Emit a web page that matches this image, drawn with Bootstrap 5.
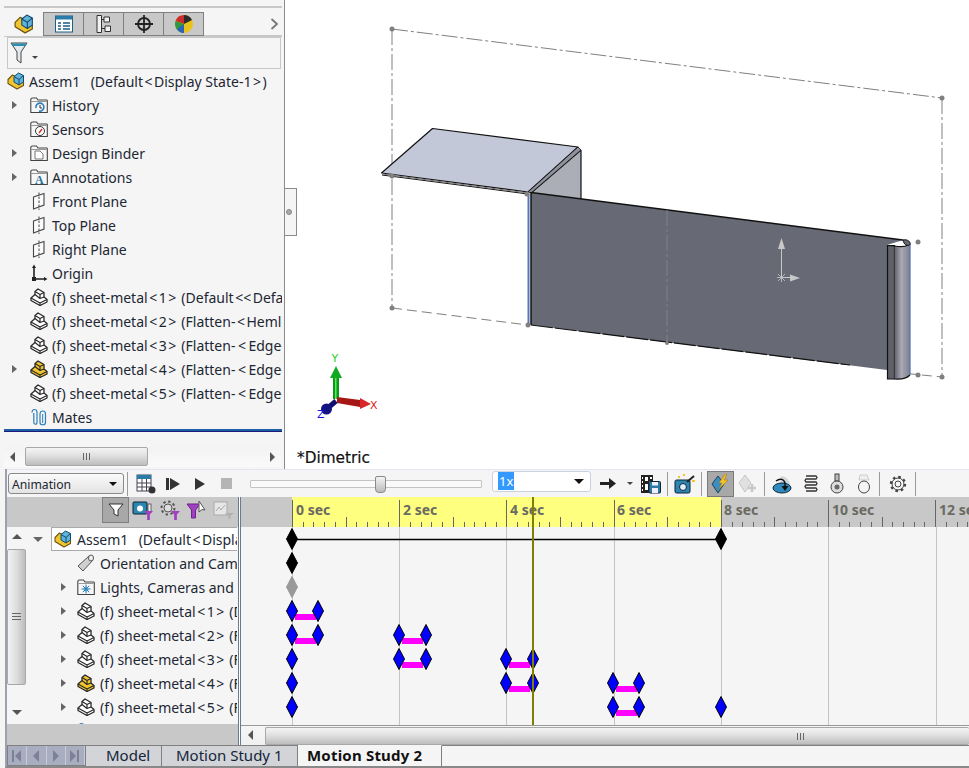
<!DOCTYPE html>
<html lang="en">
<head>
<meta charset="utf-8">
<title>Assem1 - Motion Study</title>
<link href="https://cdn.jsdelivr.net/npm/bootstrap@5.3.0/dist/css/bootstrap.min.css" rel="stylesheet">
<style>
html,body{height:100%;margin:0}
body{width:969px;height:768px;background:#f5f5f5;font-family:"Noto Sans",sans-serif;font-size:14px;color:#1c2733;overflow:hidden}
svg{display:block;flex:none}
.ab{margin:0 1.5px}
.ab2{margin:0 2.5px}
.top-pane{height:469px}
.tree-pane{width:285px;flex:none;border-right:1px solid #8c8c8c;padding:6px 2px 0 4px;background:#f5f5f5}
.rule{border-top:2px solid #c8c8c8;height:6px}
.pm-tabs{height:25px;border-bottom:2px solid #c8c8c8;flex-wrap:nowrap}
.pm-tabs .nav-link{width:40px;height:24px;padding:0;margin-right:0;background:#c8c8c8;border:1px solid #808080;border-left:0;border-radius:0;display:flex;align-items:center;justify-content:center}
.pm-tabs .nav-link.active{background:#f5f5f5;border:0;border-right:1px solid #808080}
.chev{margin-left:auto;margin-right:3px;align-self:center}
.filter-box{margin:0 1px 0 3px;height:32px;border:1px solid #c8c8c8;padding:3px 0 0 2px}
.tree{margin:0;padding:0;list-style:none;overflow:hidden;border-bottom:2px solid #1f5fa8;box-shadow:0 1px 0 #1a1a7a}
.tree li{height:24px;display:flex;align-items:center;white-space:nowrap;overflow:hidden}
.tw{width:26px;flex:none;display:flex;justify-content:center;padding-right:6px}
.tree .ic{margin-right:4px}
.tree .root-row .ic{margin-left:3px;margin-right:4px}
.nb{margin-right:3px}
.exp{display:inline-block;width:0;height:0;border-left:5px solid #666;border-top:4px solid transparent;border-bottom:4px solid transparent}
.exp-down{display:inline-block;width:0;height:0;border-top:5px solid #666;border-left:5px solid transparent;border-right:5px solid transparent}
.hscroll{height:20px;background:linear-gradient(#f3f3f3,#fafafa);position:relative}
.left-hs{margin-top:16px;margin-right:1px}
.thumb-h{background:linear-gradient(#f4f4f4,#e0e0e0 45%,#bdbdbd);border:1px solid #a8a8a8;border-radius:2px;display:flex;align-items:center;justify-content:center}
.left-hs .thumb-h{margin-left:21px;width:123px;height:19px}
.arr-l,.arr-r{width:0;height:0;border-top:5px solid transparent;border-bottom:5px solid transparent}
.arr-l{border-right:5px solid #555}
.arr-r{border-left:5px solid #555}
.left-hs .arr-l{position:absolute;left:6px;top:5px}
.left-hs .arr-r{position:absolute;right:6px;top:5px}
.viewport{background:#fff;position:relative}
.viewport>svg{width:684px;height:469px}
.sash{position:absolute;left:0;top:188px;width:12px;height:48px;background:#f5f5f5;border:1px solid #8c8c8c;border-left:0;display:flex;align-items:center;justify-content:center}
.sash i{width:6px;height:6px;border-radius:50%;background:#aaa;border:1px solid #888;margin-right:3px}
.motion{margin-left:5px;border-left:2px solid #9aa3ad;height:276px;background:#f5f5f5}
.mtb{height:28px;padding-left:1px;border-top:1px solid #e3e6f0;align-items:center}
.drop{height:21px;display:flex;align-items:center;justify-content:space-between;border-radius:3px;font-size:12.200px;color:#1c2733;padding:3px 6px 0 3px}
.drop::after{border-top-width:.4em;border-right-width:.4em;border-left-width:.4em;color:#111;margin:0 0 3px}
.anim{width:116px;background:linear-gradient(#fafafa,#e4e4e4);border:1px solid #8a8a8a}
.rate{width:99px;margin:0 0 5px 10px;background:#fff;border:1px solid #c9d3e0;padding:0 6px 0 5px;font-size:13px}
.rate::after{margin:0}
.rate span{background:#3399ff;color:#fff;padding:0 1px;line-height:18px}
.sep{width:1px;height:24px;background:#9a9a9a;flex:none}
.tb{display:flex;align-items:center;justify-content:center;flex:none;height:26px}
.w27{width:27px}.w33{width:33px}.w12{width:12px}.w29{width:29px}.w26{width:26px}.w35{width:35px}
.m3{margin-left:3px}.m2{margin-left:2px}.m4{margin-left:4px}.m5{margin-left:5px}
.on{background:#a8a8a8;border:1px solid #7a7a7a}
.slider{width:232px;margin-left:10px;position:relative;height:8px;background:#fafafa;border:1px solid #c4c4c4;border-radius:1px}
.slider i{position:absolute;left:124px;top:-5px;width:11px;height:17px;background:linear-gradient(#f4f4f4,#bbb);border:1px solid #8a8a8a;border-radius:2px 2px 4px 4px}
.m-body{height:248px}
.m-left{width:231px;flex:none}
.m-head{height:30px;background:#c8c8c8;padding-left:95px}
.fbtn{width:27px;background:#a8a8a8;border:1px solid #7f7f7f}
.ico{width:27px}
.m-rows{height:197px}
.vscroll{width:20px;flex:none;background:#f5f5f5;position:relative;padding-top:22px}
.thumb-v{width:19px;height:136px;background:linear-gradient(90deg,#f2f2f2,#dedede 50%,#bdbdbd);border:1px solid #a8a8a8;border-radius:2px;display:flex;align-items:center;justify-content:center}
.arr-u,.arr-d{position:absolute;left:5px;width:0;height:0;border-left:5px solid transparent;border-right:5px solid transparent}
.arr-u{top:7px;border-bottom:5px solid #555}
.arr-d{bottom:9px;border-top:5px solid #555}
.mtree{margin:0 1px 0 0;padding:0;list-style:none;flex:1;overflow:hidden;min-width:0}
.mtree li{height:24px;display:flex;align-items:center;white-space:nowrap;overflow:hidden}
.mtree .mroot{margin-left:24px;background:#fff;border:1px solid #aaa;border-right:0;padding-left:2px}
.mtw{width:50px;flex:none;display:flex;justify-content:flex-end;padding-right:11px}
.mtree .ic{margin-right:5px}
.mroot-x{position:relative}
.x-down{position:absolute;left:6px;top:10px}
.m-foot{height:21px;background:#c8c8c8}
.split{width:3px;flex:none;border-left:1px solid #6c7a8c;border-right:1px solid #6c7a8c;background:#fff}
.m-right{width:728px;flex:none}
.m-right .hscroll{border-top:1px solid #999;background:linear-gradient(#f6f6f6,#f0f0f0)}
.m-right .thumb-h{position:absolute;left:24px;right:0;top:1px;height:18px;border-right:0;justify-content:flex-start}
.m-right .thumb-h svg{margin-left:530px}
.m-right .arr-l{position:absolute;left:7px;top:4px}
.sheet-tabs{height:21px;flex-wrap:nowrap;background:#f5f5f5;border-bottom:2px solid #888;margin-left:5px;border-left:2px solid #9aa3ad;box-sizing:content-box}
.sheet-nav{width:79px;background:#a9adc0;display:flex;border:1px solid #808080;flex:none}
.sheet-nav span{flex:1;border-right:1px solid #c9ccd8;display:flex;align-items:center;justify-content:center}
.sheet-tabs .nav-link{height:21px;border:0;border-top:1px solid #808080;border-right:1px solid #808080;border-radius:0;background:#d2d4d8;color:#14253a;font-size:15px;line-height:19px;text-align:left}
.sheet-tabs .t1{width:76px;padding:0 0 0 20px}
.sheet-tabs .t2{width:136px;padding:0 0 0 14px}
.sheet-tabs .nav-link.active{width:144px;padding:0 0 0 9px;background:#f5f5f5;color:#111;font-weight:700;letter-spacing:.2px;border-top:1px solid #f5f5f5}
.sheet-fill{flex:1;border-top:1px solid #808080}
.tl-text{font-family:"Noto Sans",sans-serif;font-weight:700;font-size:14px;fill:#6a6a62}
.dim-text{font-family:"DejaVu Sans",sans-serif;font-size:15.300px;fill:#111;stroke:#111;stroke-width:.2px}
.axis-text{font-family:"DejaVu Sans",sans-serif;font-size:11px}
.yl{--f:#f2c52e}
</style>
</head>
<body>
<svg width="0" height="0" class="position-absolute">
<defs>
<symbol id="part" viewBox="0 0 18 18"><path fill="var(--f,#fff)" stroke="#2a2a2a" stroke-width="1.300" stroke-linejoin="round" d="M1 10 5 6.500V3.500L8 1l6 3.500V9l3 2.500V14l-7 3.500-9-5z"/><path fill="none" stroke="#2a2a2a" stroke-width="1.200" stroke-linejoin="round" d="M5 3.500l5 3 4-2M10 6.500v4L5 6.500M1 10l9 5v2.500M10 15l7-3.500M10 10.500 14 9"/></symbol>
<symbol id="asm" viewBox="0 0 18 18"><path fill="#f2c52e" stroke="#6b5310" stroke-width="1.100" stroke-linejoin="round" d="M1 7.500 5.500 3l3 1.500v5l8 .5v3.500L10 17 1 11.500z"/><path fill="#5fb3dc" stroke="#134a6a" stroke-width="1" stroke-linejoin="round" d="M7 4.500 11.500 1l5 2.500V10L12 13 7 10z"/><path fill="none" stroke="#134a6a" d="M7 4.500 12 7.500l4.500-4M12 7.500V13"/></symbol>
<symbol id="folder" viewBox="0 0 18 18"><path fill="#f7f7f7" stroke="#444" stroke-width="1.100" d="M.8 3.500C.8 2.500 1.500 2 2.500 2h4l1.500 2h8.500c.5 0 .8.300.8.800V16.500H.8z"/><path fill="none" stroke="#999" d="M1.500 5.500h15"/></symbol>
<symbol id="plane" viewBox="0 0 18 18"><path fill="#fbfbfb" stroke="#444" stroke-width="1.100" d="M3.500 5 14 1.500V13L3.500 17z"/><path fill="none" stroke="#444" stroke-dasharray="2.500 1.500" d="M9 .5V18"/></symbol>
<symbol id="origin" viewBox="0 0 18 18"><path fill="none" stroke="#222" stroke-width="1.600" d="M4 3v12h12"/><path fill="#222" d="M4 .5 6 4H2zM17.500 15 14 17v-4zM2 13h4v4H2z"/></symbol>
<symbol id="mates" viewBox="0 0 18 18"><path fill="none" stroke="#2c7fb8" stroke-width="1.200" d="M2 4.500C2 .5 7 .5 7 4.500V14C7 17 3.800 17 3.800 14V5"/><path fill="none" stroke="#2c7fb8" stroke-width="1.200" d="M10 6c0-4 5.500-4 5.500 0v8.500c0 3-5.500 3-5.500 0V6"/><path fill="none" stroke="#2c7fb8" d="M12.700 6v9"/></symbol>
<symbol id="purple" viewBox="0 0 10 10"><path fill="#a03fc0" d="M0 0h10L6.500 4v6h-3V4z"/></symbol>
</defs>
</svg>

<div class="top-pane d-flex">
  <aside class="tree-pane">
    <div class="rule"></div>
    <nav class="nav pm-tabs">
      <a class="nav-link active"><svg width="20" height="20"><use href="#asm"/></svg></a>
      <a class="nav-link"><svg width="20" height="18" viewBox="0 0 20 18"><rect x="1.500" y="1" width="17" height="16" fill="#fff" stroke="#1d5f85"/><rect x="1.500" y="1" width="17" height="3.500" fill="#2b7ba8"/><path stroke="#1d5f85" stroke-width="1.500" d="M4 8h3M9 8h7M4 11h3M9 11h7M4 14h3M9 14h7"/></svg></a>
      <a class="nav-link"><svg width="15" height="20" viewBox="0 0 15 20"><path fill="#f2f2f2" stroke="#333" d="M1 1.500h4.500v17H1zM8 3h5.500v5H8zM9 12h5.500v5.500H9z"/><path fill="none" stroke="#333" d="M5.500 5.500H8M5.500 14.500H9"/></svg></a>
      <a class="nav-link"><svg width="20" height="20" viewBox="0 0 20 20"><circle cx="10" cy="10" r="6" fill="none" stroke="#222" stroke-width="1.800"/><path stroke="#222" stroke-width="1.800" d="M10 1v18M1 10h18"/></svg></a>
      <a class="nav-link"><svg width="20" height="20" viewBox="0 0 20 20"><circle cx="10" cy="10" r="9" fill="#e8c21c"/><path fill="#cf2a2a" d="M10 1a9 9 0 0 0-8.500 6L10 10z"/><path fill="#2f9a3a" d="M1.500 7A9 9 0 0 0 10 19l0-9z"/><path fill="#2a2a2a" d="M10 1a9 9 0 0 1 8 5l-8 4z"/><path fill="#2b63b8" d="M3 15a9 9 0 0 0 7 4v-9z"/></svg></a>
      <svg class="chev" width="9" height="12" viewBox="0 0 9 12"><path fill="none" stroke="#777" stroke-width="1.800" d="M1.500 1 7 6l-5.500 5"/></svg>
    </nav>
    <div class="filter-box d-flex">
      <svg width="18" height="24" viewBox="0 0 18 24"><path fill="#e4e9eb" stroke="#444" d="M1 2h16l-6 9v11l-4-3v-8z"/><path fill="#2b8fb0" d="M1.500 2.500h15L15 5H3z"/></svg>
      <svg class="align-self-end mb-2 ms-1" width="6" height="4" viewBox="0 0 6 4"><path fill="#444" d="M0 0h6L3 3z"/></svg>
    </div>
    <ul class="tree">
      <li class="root-row"><svg class="ic" width="18" height="18"><use href="#asm"/></svg><span>Assem1<span class="nb">&nbsp;</span> (Default<span class="ab">&lt;</span>Display State-1<span class="ab">&gt;</span>)</span></li>
      <li><span class="tw"><i class="exp"></i></span><svg class="ic" width="18" height="18"><use href="#folder"/><path fill="none" stroke="#2c7fb8" stroke-width="1.600" d="M6 12a4 4 0 1 1 3 3"/><path fill="none" stroke="#333" d="M10 9v3h2"/></svg><span>History</span></li>
      <li><span class="tw"></span><svg class="ic" width="18" height="18"><use href="#folder"/><circle cx="10" cy="11" r="4.500" fill="#fff" stroke="#333"/><path stroke="#d6392a" stroke-width="1.600" d="M9 13l3-4"/></svg><span>Sensors</span></li>
      <li><span class="tw"><i class="exp"></i></span><svg class="ic" width="18" height="18"><use href="#folder"/><path fill="#fff" stroke="#777" d="M5 7h5l3 3v5H5z"/></svg><span>Design Binder</span></li>
      <li><span class="tw"><i class="exp"></i></span><svg class="ic" width="18" height="18"><use href="#folder"/><text x="5" y="15.500" font-family="Liberation Serif,serif" font-weight="700" font-size="12" fill="#2c6f9f">A</text></svg><span>Annotations</span></li>
      <li><span class="tw"></span><svg class="ic" width="18" height="18"><use href="#plane"/></svg><span>Front Plane</span></li>
      <li><span class="tw"></span><svg class="ic" width="18" height="18"><use href="#plane"/></svg><span>Top Plane</span></li>
      <li><span class="tw"></span><svg class="ic" width="18" height="18"><use href="#plane"/></svg><span>Right Plane</span></li>
      <li><span class="tw"></span><svg class="ic" width="18" height="18"><use href="#origin"/></svg><span>Origin</span></li>
      <li><span class="tw"></span><svg class="ic" width="18" height="18"><use href="#part"/></svg><span>(f) sheet-metal<span class="ab">&lt;</span>1<span class="ab">&gt;</span> (Default<span class="ab">&lt;&lt;</span>Default&gt;_Display</span></li>
      <li><span class="tw"></span><svg class="ic" width="18" height="18"><use href="#part"/></svg><span>(f) sheet-metal<span class="ab">&lt;</span>2<span class="ab">&gt;</span> (Flatten-<span class="ab">&lt;</span>Hemlock&gt;)</span></li>
      <li><span class="tw"></span><svg class="ic" width="18" height="18"><use href="#part"/></svg><span>(f) sheet-metal<span class="ab">&lt;</span>3<span class="ab">&gt;</span> (Flatten-<span class="ab2">&lt;</span>Edge-Flange&gt;)</span></li>
      <li><span class="tw"><i class="exp"></i></span><svg class="ic yl" width="18" height="18"><use href="#part"/></svg><span>(f) sheet-metal<span class="ab">&lt;</span>4<span class="ab">&gt;</span> (Flatten-<span class="ab2">&lt;</span>Edge-Flange&gt;)</span></li>
      <li><span class="tw"></span><svg class="ic" width="18" height="18"><use href="#part"/></svg><span>(f) sheet-metal<span class="ab">&lt;</span>5<span class="ab">&gt;</span> (Flatten-<span class="ab2">&lt;</span>Edge-Flange&gt;)</span></li>
      <li><span class="tw"></span><svg class="ic" width="18" height="18"><use href="#mates"/></svg><span>Mates</span></li>
    </ul>
    <div class="hscroll left-hs">
      <i class="arr-l"></i>
      <div class="thumb-h"><svg width="10" height="9"><path stroke="#666" d="M1.500 1v7M4.500 1v7M7.500 1v7"/></svg></div>
      <i class="arr-r"></i>
    </div>
  </aside>

  <main class="viewport flex-grow-1">
    <svg viewBox="285 0 684 469">
      <defs>
        <linearGradient id="hem"><stop offset="0" stop-color="#5f6069"/><stop offset=".45" stop-color="#a9aab6"/><stop offset="1" stop-color="#7d7e8a"/></linearGradient>
      </defs>
      <g fill="none" stroke="#808080" stroke-width="1" stroke-dasharray="16 3 3 3">
        <path d="M392 29 942 98"/><path d="M942 98V377"/><path d="M392 29V308"/>
        <path stroke-dasharray="10 5" d="M392 308 528 325M892 372 942 377"/>
      </g>
      <path fill="#abadb7" d="M581 150V199L531 193z"/>
      <path fill="none" stroke="#111" stroke-width="1.200" d="M581 150V199M531 193 581 150"/>
      <path fill="#c3c8d9" stroke="#111" stroke-width="1.200" stroke-linejoin="round" d="M381.500 173 432.500 128.500 578 147 528 192z"/>
      <path fill="#8f919c" stroke="#111" stroke-width=".8" d="M528 192 578 147 581 150 531 193z"/>
      <path fill="none" stroke="#111" stroke-width="1" d="M382 175 528 194"/>
      <path fill="none" stroke="#777" stroke-width="1" d="M382 174 528 193"/>
      <path fill="#676a74" d="M531 192.500 903 240 887 245V370L531 325z"/>
      <path fill="none" stroke="#111" stroke-width="1.600" d="M531 192.500 903 240"/>
      <path fill="none" stroke="#111" stroke-width="1.200" stroke-dasharray="22 2" d="M531 325 850 365"/>
      <path stroke="#111" stroke-width="1.500" d="M531 192V325"/>
      <path stroke="#5a74b8" stroke-width="2" d="M528.500 194V325"/>
      <path fill="none" stroke="#7f818a" stroke-dasharray="16 3 3 3" d="M667 210V342"/>
      <path fill="#5f6069" stroke="#111" stroke-width="1.200" d="M887.500 245.500H894.500V379H887.500z"/>
      <path fill="url(#hem)" d="M894.500 246C899 247 905 247 910 244V375C906 379 899 379.500 894.500 379z"/>
      <path fill="none" stroke="#111" stroke-width="1.200" d="M887 245.500 894.500 246C900 247 905 247 908 245M894.500 379C900 379.500 906 379 910 375"/>
      <path fill="#676a74" stroke="#111" stroke-width="1" d="M903 240C908 239 911 242 910 245 907 246 904 245 903 240z"/>
      <path stroke="#5a74b8" stroke-width="1.300" d="M910 245V375"/>
      <g fill="#808080">
        <circle cx="392" cy="29" r="2.500"/><circle cx="942" cy="98" r="2.500"/><circle cx="942" cy="377" r="2.500"/><circle cx="392" cy="308" r="2.500"/><circle cx="392" cy="176" r="2.500"/><circle cx="527" cy="194" r="2.500"/><circle cx="528" cy="325" r="2.500"/><circle cx="918" cy="242" r="2.500"/><circle cx="918" cy="375" r="2.500"/><circle cx="667" cy="343" r="2"/>
      </g>
      <g fill="#c8c8c8" stroke="#c8c8c8">
        <path d="M781.500 249V277" fill="none"/><path d="M781.500 238 785 249H778z" stroke="none"/>
        <path d="M781 277.500H792" fill="none"/><path d="M800 278 790 281.500V274.500z" stroke="none"/>
        <path d="M777 277.500h9M781.500 273v9M778 274l7 7M785 274l-7 7" fill="none" stroke-width=".8"/>
      </g>
      <path fill="#0a9a1a" d="M333 377H339V399H333z"/>
      <path fill="#5ee85e" d="M335 377h1.500v22H335z"/>
      <path fill="#12a824" d="M336 366 342 378H330z"/>
      <path fill="#a51616" d="M337 397 360 400V407L337 403z"/>
      <path fill="#d8262a" d="M360 398 371 404 360 409z"/>
      <path fill="#0f0f70" stroke="#0f0f70" stroke-width="5" d="M336 401 329 407"/>
      <circle cx="326.500" cy="409" r="5.500" fill="#141480"/>
      <text class="axis-text" x="331.500" y="362" fill="#1dd11d">Y</text>
      <text class="axis-text" x="370" y="409" fill="#e01515">X</text>
      <text class="axis-text" x="317" y="418" fill="#1515e0">Z</text>
      <text class="dim-text" x="297" y="463">*Dimetric</text>
    </svg>
    <div class="sash"><i></i></div>
  </main>
</div>

<section class="motion d-flex flex-column">
  <div class="mtb d-flex">
    <button class="btn drop anim dropdown-toggle" type="button">Animation</button>
    <div class="sep m3"></div>
    <span class="tb w27 m4"><svg width="22" height="22" viewBox="0 0 22 22"><rect x="2" y="2" width="14" height="16" fill="#fff" stroke="#445"/><rect x="2" y="2" width="14" height="4" fill="#2b7ba8"/><path stroke="#445" d="M2 10h14M2 14h14M7 6v12M11.500 6v12"/><circle cx="17" cy="17" r="3.500" fill="#333"/></svg></span>
    <span class="tb w27"><svg width="16" height="14" viewBox="0 0 16 14"><path fill="#333" d="M1 1h3v12H1zM5 1l10 6-10 6z"/></svg></span>
    <span class="tb w27"><svg width="14" height="14" viewBox="0 0 14 14"><path fill="#333" d="M2 1l10 6-10 6z"/></svg></span>
    <span class="tb w27"><svg width="12" height="12"><rect width="11" height="11" fill="#b5b5b5"/></svg></span>
    <div class="slider"><i></i></div>
    <button class="btn drop rate dropdown-toggle" type="button"><span>1x</span></button>
    <span class="tb w33"><svg width="16" height="13" viewBox="0 0 16 13"><path fill="#222" d="M0 5h9V1l7 5.500-7 5.500V8H0z"/></svg></span>
    <span class="tb w12"><svg width="6" height="4"><path fill="#444" d="M0 0h6L3 3z"/></svg></span>
    <span class="tb w29"><svg width="20" height="20" viewBox="0 0 20 20"><path fill="#222" d="M0 1h12v6H8v12H0z"/><path fill="#fff" d="M1 3h1v2H1zM1 7h1v2H1zM1 11h1v2H1zM1 15h1v2H1zM4 3h3v4H4zM4 10h3v6H4zM9 3h2v2H9z"/><rect x="8" y="7.500" width="11.500" height="11.500" rx="1" fill="#2b7ba8" stroke="#123"/><path fill="#eef" d="M11 8h6v3.500h-6zM11 14h6v5h-6z"/></svg></span>
    <div class="sep m2"></div>
    <span class="tb w33"><svg width="22" height="20" viewBox="0 0 22 20"><rect x="1" y="6" width="15" height="13" rx="1.500" fill="#2b86b3" stroke="#123"/><circle cx="9" cy="13" r="3.500" fill="#dfeef6" stroke="#123"/><path stroke="#222" stroke-width="2" d="M13 8 20 2"/><path fill="#f2c52e" d="M4 2h2v2H4zM9 0h2v2H9zM18 6h3v2h-3z"/></svg></span>
    <div class="sep"></div>
    <span class="tb w27 m5 on"><svg width="20" height="20" viewBox="0 0 20 20"><path fill="#3c8ec1" stroke="#245" d="M7 2 13 10 7 19 1 10z"/><path fill="#f6c42a" stroke="#a87a10" stroke-width=".6" d="M14 0 8 9h3l-3 6 9-9h-4l3-6z"/></svg></span>
    <span class="tb w27"><svg width="20" height="20" viewBox="0 0 20 20"><path fill="#e0e0e0" stroke="#c6c6c6" d="M7 1 13 9 7 18 1 9z"/><path stroke="#c8c8c8" stroke-width="2.500" d="M14 10v8M10 14h8"/></svg></span>
    <div class="sep m3"></div>
    <span class="tb w33"><svg width="20" height="20" viewBox="0 0 20 20"><path fill="#cfd8dd" d="M9 2a9 9 0 0 1 9 9H8z"/><ellipse cx="10" cy="14" rx="9" ry="5" fill="#2f8bbd" stroke="#123"/><path fill="none" stroke="#111" stroke-width="1.500" d="M4 7c4-3 8-2 9 2v5"/><path fill="#111" d="M13 17 9.500 12h7z"/></svg></span>
    <span class="tb w26"><svg width="14" height="20" viewBox="0 0 14 20"><path fill="none" stroke="#333" stroke-width="1.300" d="M2 2h10l1 1.500-1 1.500H2L1 6.500 2 8h10l1 1.500-1 1.500H2l-1 1.500L2 14h10l1 1.500-1 1.500H2"/></svg></span>
    <span class="tb w26"><svg width="14" height="22" viewBox="0 0 14 22"><rect x="5" y="1" width="4" height="7" fill="#bbb" stroke="#444"/><ellipse cx="7" cy="14" rx="6" ry="6" fill="#ddd" stroke="#444"/><circle cx="7" cy="14" r="2.500" fill="#666"/></svg></span>
    <span class="tb w27"><svg width="14" height="20" viewBox="0 0 14 20"><path fill="#eee" stroke="#ccc" d="M3 1h7l2 5H2z"/><ellipse cx="7" cy="13" rx="5.500" ry="6" fill="#f4f4f4" stroke="#444"/></svg></span>
    <div class="sep m2"></div>
    <span class="tb w35"><svg width="18" height="18" viewBox="0 0 18 18"><circle cx="9" cy="9" r="3" fill="none" stroke="#444"/><circle cx="9" cy="9" r="7" fill="none" stroke="#444" stroke-width="2.400" stroke-dasharray="2.600 2.900"/><circle cx="9" cy="9" r="6" fill="none" stroke="#444"/></svg></span>
    <div class="sep"></div>
  </div>

  <div class="m-body d-flex">
    <div class="m-left d-flex flex-column">
      <div class="m-head d-flex">
        <span class="tb fbtn"><svg width="16" height="16" viewBox="0 0 16 16"><path fill="#fff" stroke="#333" d="M1 2h14l-5 6v6l-4-2V8z"/></svg></span>
        <span class="tb ico"><svg width="22" height="20" viewBox="0 0 22 20"><rect x="1" y="2" width="14" height="12" rx="1" fill="#2b86b3" stroke="#123"/><circle cx="8" cy="8.500" r="3" fill="#fff"/><rect x="16" y="4" width="3" height="8" fill="#eee" stroke="#333" stroke-width=".7"/><use href="#purple" x="12" y="11" width="9" height="9"/></svg></span>
        <span class="tb ico"><svg width="22" height="20" viewBox="0 0 22 20"><circle cx="9" cy="8" r="4" fill="#ddd" stroke="#555"/><circle cx="9" cy="8" r="6.500" fill="none" stroke="#555" stroke-width="2" stroke-dasharray="2.400 2.600"/><use href="#purple" x="12" y="11" width="9" height="9"/></svg></span>
        <span class="tb ico"><svg width="22" height="20" viewBox="0 0 22 20"><path fill="#a03fc0" stroke="#6a2388" d="M1 4h13l-4.500 6v8h-4v-8z"/><path fill="#fff" stroke="#555" d="M13 1l0 11 3-2.500 3 .5z"/></svg></span>
        <span class="tb ico"><svg width="22" height="20" viewBox="0 0 22 20"><rect x="1" y="2" width="13" height="13" fill="#e6e6e6" stroke="#aaa"/><path fill="none" stroke="#aaa" d="M3 11l3-4 2 3 4-5"/><path fill="#b0b0b0" d="M12 13h9l-3.500 3v3h-2v-3z"/></svg></span>
      </div>
      <div class="m-rows d-flex">
        <div class="vscroll">
          <i class="arr-u"></i>
          <div class="thumb-v"><svg width="9" height="10"><path stroke="#666" d="M0 1.500h9M0 4.500h9M0 7.500h9"/></svg></div>
          <i class="arr-d"></i>
        </div>
        <ul class="mtree">
          <li class="mroot-x"><i class="exp-down x-down"></i><div class="mroot d-flex align-items-center flex-grow-1 h-100"><svg class="ic" width="18" height="18"><use href="#asm"/></svg><span>Assem1<span class="nb">&nbsp;</span> (Default<span class="ab">&lt;</span>Display State-1&gt;)</span></div></li>
          <li><span class="mtw"></span><svg class="ic" width="18" height="18" viewBox="0 0 18 18"><path fill="#cfcfcf" stroke="#555" d="M1 12 12 2l4 4L6 17z"/><ellipse cx="14" cy="4" rx="2.500" ry="3" fill="#f2f2f2" stroke="#555"/></svg><span>Orientation and Camera Views</span></li>
          <li><span class="mtw"><i class="exp"></i></span><svg class="ic" width="18" height="18"><use href="#folder"/><circle cx="9" cy="11" r="2.500" fill="#7fc3e3"/><path stroke="#2c7fb8" d="M9 6.500v9M4.500 11h9M5.800 7.800l6.400 6.400M12.200 7.800l-6.400 6.400"/></svg><span>Lights, Cameras and Scene</span></li>
          <li><span class="mtw"><i class="exp"></i></span><svg class="ic" width="18" height="18"><use href="#part"/></svg><span>(f) sheet-metal<span class="ab">&lt;</span>1<span class="ab">&gt;</span> (Default&lt;&lt;Default</span></li>
          <li><span class="mtw"><i class="exp"></i></span><svg class="ic" width="18" height="18"><use href="#part"/></svg><span>(f) sheet-metal<span class="ab">&lt;</span>2<span class="ab">&gt;</span> (Flatten-&lt;Hem</span></li>
          <li><span class="mtw"><i class="exp"></i></span><svg class="ic" width="18" height="18"><use href="#part"/></svg><span>(f) sheet-metal<span class="ab">&lt;</span>3<span class="ab">&gt;</span> (Flatten-&lt;Edge</span></li>
          <li><span class="mtw"><i class="exp"></i></span><svg class="ic yl" width="18" height="18"><use href="#part"/></svg><span>(f) sheet-metal<span class="ab">&lt;</span>4<span class="ab">&gt;</span> (Flatten-&lt;Edge</span></li>
          <li><span class="mtw"><i class="exp"></i></span><svg class="ic" width="18" height="18"><use href="#part"/></svg><span>(f) sheet-metal<span class="ab">&lt;</span>5<span class="ab">&gt;</span> (Flatten-&lt;Edge</span></li>
          <li><span class="mtw"></span><svg class="ic" width="18" height="18"><use href="#mates"/></svg><span>Mates</span></li>
        </ul>
      </div>
      <div class="m-foot"></div>
    </div>
    <div class="split"></div>
    <div class="m-right d-flex flex-column">
      <svg id="timeline" width="728" height="228" viewBox="241 497 728 228">
        <defs><polygon id="dm" points="0,-10.500 5.500,0 0,10.500 -5.500,0"/></defs>
        <rect x="241" y="497" width="728" height="30" fill="#c8c8c8"/>
        <rect x="292" y="497" width="429" height="30" fill="#ffff7f"/>
        <path id="ticks" fill="none" stroke="#666" stroke-width="1" d=""/>
        <text class="tl-text" x="296" y="515">0 sec</text>
        <text class="tl-text" x="403" y="515">2 sec</text>
        <text class="tl-text" x="510" y="515">4 sec</text>
        <text class="tl-text" x="617" y="515">6 sec</text>
        <text class="tl-text" x="724" y="515">8 sec</text>
        <text class="tl-text" x="832" y="515">10 sec</text>
        <text class="tl-text" x="939" y="515">12 sec</text>
        <path stroke="#c4c4c4" fill="none" d="M292.500 527V725M399.500 527V725M506.500 527V725M614.500 527V725M721.500 527V725M828.500 527V725M936.500 527V725"/>
        <path stroke="#000" stroke-width="1.500" d="M292 539.500H721"/>
        <g fill="#ff00ff">
          <rect x="295" y="614" width="21" height="6"/>
          <rect x="295" y="638" width="21" height="6"/><rect x="402" y="638" width="21" height="6"/>
          <rect x="402" y="662" width="21" height="6"/><rect x="509" y="662" width="21" height="6"/>
          <rect x="509" y="686" width="21" height="6"/><rect x="616" y="686" width="21" height="6"/>
          <rect x="616" y="710" width="21" height="6"/>
        </g>
        <g fill="#000" stroke="#000"><use href="#dm" x="292" y="539"/><use href="#dm" x="721" y="539"/><use href="#dm" x="292" y="563"/></g>
        <g fill="#999" stroke="#999"><use href="#dm" x="292" y="587"/></g>
        <g fill="#0000ff" stroke="#000">
          <use href="#dm" x="292" y="611"/><use href="#dm" x="318" y="611"/>
          <use href="#dm" x="292" y="635"/><use href="#dm" x="318" y="635"/><use href="#dm" x="399" y="635"/><use href="#dm" x="426" y="635"/>
          <use href="#dm" x="292" y="659"/><use href="#dm" x="399" y="659"/><use href="#dm" x="426" y="659"/><use href="#dm" x="506" y="659"/><use href="#dm" x="533" y="659"/>
          <use href="#dm" x="292" y="683"/><use href="#dm" x="506" y="683"/><use href="#dm" x="533" y="683"/><use href="#dm" x="613" y="683"/><use href="#dm" x="639" y="683"/>
          <use href="#dm" x="292" y="707"/><use href="#dm" x="613" y="707"/><use href="#dm" x="639" y="707"/><use href="#dm" x="721" y="707"/>
        </g>
        <rect x="532" y="497" width="2" height="228" fill="#808000"/>
      </svg>
      <div class="hscroll">
        <i class="arr-l"></i>
        <div class="thumb-h"><svg width="10" height="9"><path stroke="#666" d="M1.500 1v7M4.500 1v7M7.500 1v7"/></svg></div>
      </div>
    </div>
  </div>
</section>

<nav class="nav sheet-tabs">
  <div class="sheet-nav">
    <span><svg width="10" height="12"><path fill="#7d8198" d="M0 0h2v12H0zM9 0v12L3 6z"/></svg></span>
    <span><svg width="8" height="12"><path fill="#7d8198" d="M7 0v12L1 6z"/></svg></span>
    <span><svg width="8" height="12"><path fill="#7d8198" d="M1 0v12l6-6z"/></svg></span>
    <span><svg width="10" height="12"><path fill="#7d8198" d="M0 0v12l6-6zM7 0h2v12H7z"/></svg></span>
  </div>
  <a class="nav-link t1">Model</a>
  <a class="nav-link t2">Motion Study 1</a>
  <a class="nav-link active">Motion Study 2</a>
  <div class="sheet-fill"></div>
</nav>
<script>
var d='',i,x;
for(i=0;i<=63;i++){x=292+i*10.72;var h=(i%10===0)?27:(i%5===0)?10:5;if(x<=969)d+='M'+(Math.round(x)+.5)+' 527v-'+h;}
document.getElementById('ticks').setAttribute('d',d);
</script>
</body>
</html>
